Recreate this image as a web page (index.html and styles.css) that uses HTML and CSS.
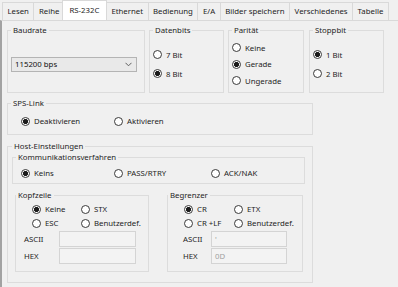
FILE: index.html
```html
<!DOCTYPE html>
<html lang="de">
<head>
    <meta charset="UTF-8">
    <title>RS-232C</title>
    <link rel="stylesheet" href="styles.css">
</head>
<body>
    <div class="tabs">
        <div class="tab">Lesen</div>
        <div class="tab">Reihe</div>
        <div class="tab active">RS-232C</div>
        <div class="tab">Ethernet</div>
        <div class="tab">Bedienung</div>
        <div class="tab">E/A</div>
        <div class="tab">Bilder speichern</div>
        <div class="tab">Verschiedenes</div>
        <div class="tab">Tabelle</div>
    </div>

    <div class="panel">
        <div class="top-row">
            <fieldset class="group baud">
                <legend>Baudrate</legend>
                <div class="combo">
                    <span>115200 bps</span>
                    <svg width="7" height="5" viewBox="0 0 7 5"><polyline points="0.5,0.8 3.5,3.8 6.5,0.8" fill="none" stroke="#606060" stroke-width="1"/></svg>
                </div>
            </fieldset>
            <fieldset class="group bits">
                <legend>Datenbits</legend>
                <label class="opt"><span class="radio"></span>7 Bit</label>
                <label class="opt"><span class="radio on"></span>8 Bit</label>
            </fieldset>
            <fieldset class="group parity">
                <legend>Parität</legend>
                <label class="opt"><span class="radio"></span>Keine</label>
                <label class="opt"><span class="radio on"></span>Gerade</label>
                <label class="opt"><span class="radio"></span>Ungerade</label>
            </fieldset>
            <fieldset class="group bits stop">
                <legend>Stoppbit</legend>
                <label class="opt"><span class="radio on"></span>1 Bit</label>
                <label class="opt"><span class="radio"></span>2 Bit</label>
            </fieldset>
        </div>

        <fieldset class="group sps">
            <legend>SPS-Link</legend>
            <div class="opt-row">
                <label class="opt w93"><span class="radio on"></span>Deaktivieren</label>
                <label class="opt"><span class="radio"></span>Aktivieren</label>
            </div>
        </fieldset>

        <fieldset class="group host">
            <legend>Host-Einstellungen</legend>
            <fieldset class="group komm">
                <legend>Kommunikationsverfahren</legend>
                <div class="opt-row">
                    <label class="opt w93"><span class="radio on"></span>Keins</label>
                    <label class="opt w97"><span class="radio"></span>PASS/RTRY</label>
                    <label class="opt"><span class="radio"></span>ACK/NAK</label>
                </div>
            </fieldset>

            <div class="sub-row">
                <fieldset class="group frame kopf">
                    <legend>Kopfzeile</legend>
                    <div class="opt-grid">
                        <label class="opt"><span class="radio on"></span>Keine</label>
                        <label class="opt"><span class="radio"></span>STX</label>
                        <label class="opt"><span class="radio"></span>ESC</label>
                        <label class="opt"><span class="radio"></span>Benutzerdef.</label>
                    </div>
                    <div class="field first"><span class="field-label">ASCII</span><div class="input"></div></div>
                    <div class="field"><span class="field-label">HEX</span><div class="input"></div></div>
                </fieldset>
                <fieldset class="group frame begr">
                    <legend>Begrenzer</legend>
                    <div class="opt-grid">
                        <label class="opt"><span class="radio on"></span>CR</label>
                        <label class="opt"><span class="radio"></span>ETX</label>
                        <label class="opt"><span class="radio"></span>CR +LF</label>
                        <label class="opt"><span class="radio"></span>Benutzerdef.</label>
                    </div>
                    <div class="field first"><span class="field-label">ASCII</span><div class="input">'</div></div>
                    <div class="field"><span class="field-label">HEX</span><div class="input">0D</div></div>
                </fieldset>
            </div>
        </fieldset>
    </div>
</body>
</html>
```

FILE: styles.css
```css
* {
    box-sizing: border-box;
}

body {
    margin: 0;
    width: 398px;
    height: 287px;
    overflow: hidden;
    background-color: #f0f0f0;
    font-family: "Noto Sans", "Open Sans", sans-serif;
    font-size: 7.8px;
    color: #1e1e1e;
}

/* Tab strip */
.tabs {
    display: flex;
    align-items: flex-end;
    height: 20px;
    padding-left: 2px;
}

.tab {
    height: 18px;
    padding: 0 4.5px;
    line-height: 17px;
    border: 1px solid #d9d9d9;
    border-bottom: none;
    margin-right: -1px;
    white-space: nowrap;
}

.tab.active {
    height: 20px;
    line-height: 19px;
    padding: 0 6.5px 2px;
    margin: 0 -1px 0 -2px;
    background-color: #fff;
}

.panel {
    height: 267px;
    border-top: 1px solid #d9d9d9;
    border-left: 2px solid #a2a2a2;
    padding: 3px 0 0 5px;
}

/* Group boxes */
.group {
    margin: 0;
    padding: 0 3px;
    border: 1px solid #dcdcdc;
    min-width: 0;
}

.group legend {
    padding: 0 2px;
    line-height: 12px;
}

.top-row {
    display: flex;
    gap: 4px;
}

.top-row .group {
    height: 69px;
    display: flex;
    flex-direction: column;
    justify-content: center;
}

.baud {
    width: 138px;
}

.bits {
    width: 75px;
    gap: 7px;
}

.parity {
    width: 76px;
    gap: 4.5px;
}

.stop {
    margin-left: 1px;
}

.combo {
    display: flex;
    align-items: center;
    justify-content: space-between;
    width: 126px;
    height: 15px;
    padding: 0 4px 0 3px;
    border: 1px solid #b4b4b4;
    background-color: #e9e9e9;
    color: #111;
}

/* Radio buttons */
.opt {
    display: flex;
    align-items: center;
    gap: 4px;
    height: 12px;
    white-space: nowrap;
}

.radio {
    flex: none;
    width: 9px;
    height: 9px;
    border: 1px solid #3a3a3a;
    border-radius: 50%;
    background-color: #fff;
}

.radio.on {
    background: radial-gradient(circle, #1a1a1a 0 2.2px, #fff 2.9px);
}

.opt-row {
    display: flex;
}

.w93 {
    width: 93px;
}

.w97 {
    width: 97px;
}

.sps {
    width: 306px;
    height: 38px;
    margin-top: 4px;
    display: flex;
    flex-direction: column;
    justify-content: center;
}

.sps .opt-row {
    padding-left: 10px;
    padding-bottom: 1px;
}

.host {
    width: 306px;
    height: 143px;
    margin-top: 5px;
    padding: 0 0 0 4px;
}

.komm {
    width: 293px;
    height: 33px;
    margin-top: -1px;
    display: flex;
    flex-direction: column;
    justify-content: center;
}

.komm .opt-row {
    padding-left: 5px;
}

.sub-row {
    display: flex;
    margin-top: 5px;
}

.frame {
    height: 83px;
    padding: 2px 0 0;
}

.kopf {
    width: 134px;
    margin-left: 3px;
}

.begr {
    width: 136px;
    margin-left: 18px;
}

.opt-grid {
    display: grid;
    grid-template-columns: 50px auto;
    row-gap: 2px;
    padding-left: 16px;
}

.kopf .opt-grid {
    grid-template-columns: 49px auto;
}

.field {
    display: flex;
    align-items: center;
    margin-top: 1px;
}

.field.first {
    margin-top: 2px;
}

.field-label {
    flex: none;
}

.kopf .field-label {
    width: 35px;
    margin-left: 8px;
}

.begr .field-label {
    width: 28px;
    margin-left: 15px;
}

.input {
    width: 77px;
    height: 16px;
    padding: 1px 3px;
    border: 1px solid #d4d4d4;
    background-color: #f3f3f3;
    color: #a0a0a0;
    line-height: 12px;
}

.begr .input {
    width: 76px;
}
```
